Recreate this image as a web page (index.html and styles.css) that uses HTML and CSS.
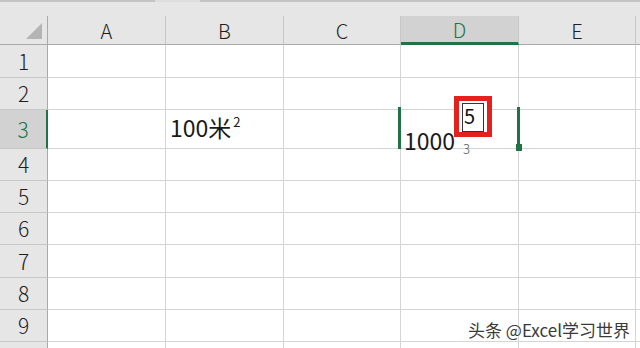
FILE: index.html
```html
<!DOCTYPE html>
<html lang="zh">
<head>
<meta charset="utf-8">
<title>Excel</title>
<link rel="stylesheet" href="styles.css">
</head>
<body>
<div class="page">
  <div class="topbar"><span class="tb-a"></span><span class="tb-b"></span><span class="tb-c"></span></div>
  <div class="hdr-gap"></div>
  <div class="sheet">
    <div class="corner"><span class="tri"></span></div>
    <div class="ch">A</div><div class="ch">B</div><div class="ch">C</div><div class="ch sel">D</div><div class="ch">E</div><div class="ch edge"></div>

    <div class="rh">1</div><div class="c"></div><div class="c"></div><div class="c"></div><div class="c"></div><div class="c"></div><div class="c edge"></div>
    <div class="rh">2</div><div class="c"></div><div class="c"></div><div class="c"></div><div class="c"></div><div class="c"></div><div class="c edge"></div>
    <div class="rh sel">3</div><div class="c"></div>
    <div class="c b3"><span class="val">100米<span class="sq">2</span></span></div>
    <div class="c"></div>
    <div class="c d3">
      <span class="edit">1000<span class="sub3">3</span></span>
      <span class="sel-l"></span><span class="sel-r"></span><span class="handle"></span>
      <div class="mark"><div class="inbox">5</div></div>
    </div>
    <div class="c"></div><div class="c edge"></div>
    <div class="rh">4</div><div class="c"></div><div class="c"></div><div class="c"></div><div class="c"></div><div class="c"></div><div class="c edge"></div>
    <div class="rh">5</div><div class="c"></div><div class="c"></div><div class="c"></div><div class="c"></div><div class="c"></div><div class="c edge"></div>
    <div class="rh">6</div><div class="c"></div><div class="c"></div><div class="c"></div><div class="c"></div><div class="c"></div><div class="c edge"></div>
    <div class="rh">7</div><div class="c"></div><div class="c"></div><div class="c"></div><div class="c"></div><div class="c"></div><div class="c edge"></div>
    <div class="rh">8</div><div class="c"></div><div class="c"></div><div class="c"></div><div class="c"></div><div class="c"></div><div class="c edge"></div>
    <div class="rh">9</div><div class="c"></div><div class="c"></div><div class="c"></div><div class="c"></div><div class="c"></div><div class="c edge"></div>
    <div class="rh"></div><div class="c"></div><div class="c"></div><div class="c"></div><div class="c"></div><div class="c"></div><div class="c edge"></div>
  </div>
  <div class="wm">头条 @Excel学习世界</div>
</div>
</body>
</html>
```
FILE: styles.css
```css
* { box-sizing: border-box; }
body {
  margin: 0;
  background: #fff;
  font-family: "Noto Sans CJK SC", "Noto Sans", sans-serif;
  font-weight: 300;
}
.page {
  position: relative;
  width: 640px;
  height: 348px;
  overflow: hidden;
}
.topbar { display: flex; height: 2px; }
.tb-a { width: 155px; background: #c4c4c4; }
.tb-b { width: 45px; background: #dedede; }
.tb-c { flex: 1; background: #c4c4c4; }
.hdr-gap { height: 14px; background: #e6e6e6; }

.sheet {
  display: grid;
  grid-template-columns: 48px 118px 118px 117px 118px 117px 4px;
  grid-template-rows: 29px 33px 32px 39px 32px 32px 32px 33px 32px 32px 40px;
}
.corner {
  background: #e6e6e6;
  border-right: 1px solid #a9a9a9;
  border-bottom: 1px solid #a9a9a9;
  display: flex;
  justify-content: flex-end;
  align-items: flex-end;
  padding: 0 5px 5px 0;
}
.tri {
  width: 0;
  height: 0;
  border-style: solid;
  border-width: 0 0 16px 16px;
  border-color: transparent transparent #b4b4b4 transparent;
}
.ch {
  background: #e6e6e6;
  border-right: 1px solid #c6c6c6;
  border-bottom: 1px solid #a9a9a9;
  display: flex;
  align-items: center;
  justify-content: center;
  font-size: 20px;
  line-height: 1;
  color: #1e1e1e;
  padding-top: 2px;
}
.ch.sel {
  background: #d2d2d2;
  color: #217346;
  border-bottom: 3px solid #217346;
}
.ch.edge { border-right: none; }
.rh {
  background: #e6e6e6;
  border-right: 1px solid #a9a9a9;
  border-bottom: 1px solid #c6c6c6;
  display: flex;
  align-items: center;
  justify-content: center;
  font-size: 21px;
  line-height: 1;
  color: #1e1e1e;
}
.rh.sel {
  background: #d2d2d2;
  color: #217346;
  border-right: 2px solid #217346;
}
.c {
  border-right: 1px solid #d4d4d4;
  border-bottom: 1px solid #d4d4d4;
}
.c.edge { border-right: none; }

.b3 {
  display: flex;
  align-items: flex-end;
  padding: 0 0 9px 4px;
}
.val {
  font-size: 23px;
  font-weight: 400;
  line-height: 23px;
  color: #1a1a1a;
  white-space: nowrap;
}
.sq {
  font-size: 13px;
  line-height: 0;
  vertical-align: 10px;
  margin-left: 2px;
}

.d3 {
  position: relative;
  display: flex;
  align-items: flex-end;
  padding-left: 3px;
}
.edit {
  font-size: 23px;
  font-weight: 400;
  line-height: 23px;
  margin-bottom: -4px;
  white-space: nowrap;
  color: #1a1a1a;
}
.sub3 {
  font-size: 13px;
  font-weight: 300;
  line-height: 0;
  color: #555;
  vertical-align: -4px;
  margin-left: 8px;
}
.sel-l, .sel-r, .handle {
  position: absolute;
  background: #217346;
}
.sel-l { left: -3px; top: -3px; width: 3px; height: 42px; }
.sel-r { left: 116px; top: -3px; width: 3px; height: 37px; }
.handle { left: 115px; top: 34px; width: 6px; height: 7px; }
.mark {
  position: absolute;
  left: 53px;
  top: -14px;
  width: 38px;
  height: 41px;
  border: 5px solid #e3211d;
  background: #fff;
  padding: 2px 3px 0;
}
.inbox {
  height: 100%;
  border: 1px solid #3d2f3d;
  font-size: 20px;
  font-weight: 400;
  line-height: 23px;
  padding-left: 1px;
  color: #111;
}
.wm {
  position: absolute;
  right: 10px;
  top: 320px;
  font-size: 17px;
  font-weight: 400;
  line-height: 20px;
  color: #3a3a3a;
  white-space: nowrap;
  text-shadow: 0 0 2px #fff, 0 0 1px #fff;
}
```
